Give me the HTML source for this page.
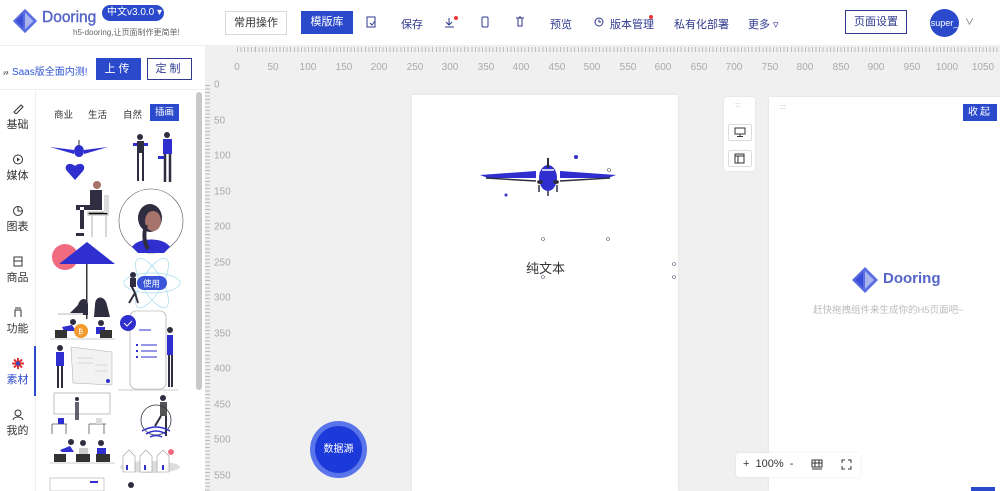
<!DOCTYPE html>
<html><head><meta charset="utf-8">
<style>
*{margin:0;padding:0;box-sizing:border-box}
body{width:1000px;height:491px;overflow:hidden;background:#f0f0f0;font-family:"Liberation Sans","Noto Sans CJK SC",sans-serif;position:relative;color:#333}
.abs{position:absolute}
.hdr{left:0;top:0;width:1000px;height:46px;background:#fff;border-bottom:1px solid #eee}
.nav{font-size:11px;color:#2f3a8f;top:16px}
.btn{border:1px solid #d9d9d9;font-size:11px;text-align:center;line-height:22px;height:24px}
.hn{font-size:10px;color:#aaa;top:62px;transform:translateX(-50%)}
.vn{font-size:10px;color:#aaa;left:214px;transform:translateY(-50%)}
.side{left:0;top:46px;width:205px;height:445px;background:#fff}
.ln{left:0;width:35px;text-align:center;font-size:11px;color:#333}
.ln svg{display:block;margin:0 auto 2px}
</style></head><body>
<div class="abs hdr"></div>
<svg class="abs" style="left:11px;top:7px" width="28" height="28" viewBox="0 0 30 30"><path d="M15 2 L28 15 L15 28 L2 15Z" fill="#5b6ee1"/><path d="M15 6 L24 15 L15 24Z" fill="#a9b4f0"/><path d="M13 7 L13 23 L5 15Z" fill="#3b4fd8"/></svg>
<div class="abs" style="left:42px;top:9px;font-size:15.5px;color:#5564c8;font-weight:normal;-webkit-text-stroke:0.4px #5564c8">Dooring</div>
<div class="abs" style="left:102px;top:5px;width:62px;height:16px;border-radius:8px;background:#2b4acb;color:#fff;font-size:10px;line-height:16px;padding-left:5px">中文v3.0.0 ▾</div>
<div class="abs" style="left:73px;top:27px;font-size:8px;color:#666">h5-dooring,让页面制作更简单!</div>
<div class="abs btn" style="left:225px;top:11px;width:62px;color:#333">常用操作</div>
<div class="abs" style="left:301px;top:11px;width:52px;height:23px;background:#2b4acb;color:#fff;font-size:11px;line-height:23px;text-align:center">模版库</div>
<svg class="abs" style="left:366px;top:16px" width="11" height="12"><rect x="1" y="1" width="8" height="10" fill="none" stroke="#2f3a8f"/><path d="M4 7l2 2 3-4" stroke="#2f3a8f" fill="none"/></svg>
<div class="abs nav" style="left:401px">保存</div>
<svg class="abs" style="left:444px;top:15px" width="14" height="14"><path d="M5 3v7M2 7l3 3 3-3M1 12h9" stroke="#2f3a8f" fill="none"/><circle cx="12" cy="3" r="2" fill="#e33"/></svg>
<svg class="abs" style="left:481px;top:16px" width="9" height="12"><rect x="1" y="1" width="6" height="10" rx="1" fill="none" stroke="#2f3a8f"/></svg>
<svg class="abs" style="left:515px;top:16px" width="10" height="11"><path d="M1 2h8M3 2v8h4V2M4 1h2" stroke="#2f3a8f" fill="none"/></svg>
<div class="abs nav" style="left:550px">预览</div>
<svg class="abs" style="left:594px;top:17px" width="10" height="10"><circle cx="5" cy="5" r="4" fill="none" stroke="#2f3a8f"/><path d="M5 2.5V5h2" stroke="#2f3a8f" fill="none"/></svg>
<div class="abs nav" style="left:610px">版本管理</div>
<div class="abs" style="left:649px;top:15px;width:4px;height:4px;border-radius:2px;background:#e33"></div>
<div class="abs nav" style="left:674px">私有化部署</div>
<div class="abs nav" style="left:748px">更多 ▿</div>
<div class="abs btn" style="left:845px;top:10px;width:62px;border-color:#2f3a8f;color:#2f3a8f">页面设置</div>
<div class="abs" style="left:930px;top:9px;width:29px;height:28px;border-radius:50%;background:#2b4acb;color:#fff;font-size:9px;line-height:28px;text-align:center;overflow:hidden">super_</div>
<div class="abs" style="left:965px;top:15px;font-size:9px;color:#666">∨</div>

<div class="abs side"></div>
<div class="abs" style="left:0;top:46px;width:205px;height:44px;border-bottom:1px solid #eee"></div>
<div class="abs" style="left:3px;top:63px;font-size:10px;color:#2f55d4"><span style="color:#666">𝓃</span> Saas版全面内测!</div>
<div class="abs" style="left:96px;top:58px;width:45px;height:22px;background:#2b4acb;color:#fff;font-size:11px;line-height:22px;text-align:center;letter-spacing:3px">上传</div>
<div class="abs" style="left:147px;top:58px;width:45px;height:22px;border:1px solid #2f3a8f;color:#2f3a8f;font-size:11px;line-height:20px;text-align:center;letter-spacing:3px">定制</div>
<div class="abs" style="left:35px;top:91px;width:1px;height:400px;background:#eee"></div>
<div class="abs ln" style="top:103px"><svg width="12" height="11"><path d="M2 9l7-7 2 2-7 7z" fill="none" stroke="#333"/></svg>基础</div>
<div class="abs ln" style="top:154px"><svg width="12" height="11"><circle cx="6" cy="5.5" r="4.5" fill="none" stroke="#333"/><path d="M5 3.5v4l3-2z" fill="#333"/></svg>媒体</div>
<div class="abs ln" style="top:205px"><svg width="12" height="11"><circle cx="6" cy="6" r="4.5" fill="none" stroke="#333"/><path d="M6 1.5V6h4.5" fill="none" stroke="#333"/></svg>图表</div>
<div class="abs ln" style="top:256px"><svg width="12" height="11"><rect x="2" y="1" width="8" height="9" fill="none" stroke="#333"/><path d="M2 5h8" stroke="#333"/></svg>商品</div>
<div class="abs ln" style="top:307px"><svg width="12" height="11"><path d="M3 10V3h6v7M3 1h6" fill="none" stroke="#333"/></svg>功能</div>
<div class="abs ln" style="top:358px;color:#2b4acb"><svg width="12" height="11"><path d="M6 0v11M0 5.5h12M2 1.5l8 8M10 1.5l-8 8" stroke="#d33" stroke-width="2"/><circle cx="6" cy="5.5" r="2" fill="#2b4acb"/></svg>素材</div>
<div class="abs" style="left:34px;top:346px;width:2px;height:50px;background:#2b4acb"></div>
<div class="abs ln" style="top:409px"><svg width="12" height="11"><circle cx="6" cy="4" r="3" fill="none" stroke="#333"/><path d="M1 11c1-4 9-4 10 0" fill="none" stroke="#333"/></svg>我的</div>
<div class="abs" style="left:54px;top:107px;font-size:9.5px;color:#333">商业</div>
<div class="abs" style="left:88px;top:107px;font-size:9.5px;color:#333">生活</div>
<div class="abs" style="left:123px;top:107px;font-size:9.5px;color:#333">自然</div>
<div class="abs" style="left:150px;top:104px;width:29px;height:17px;background:#2b4acb;color:#fff;font-size:9.5px;line-height:17px;text-align:center">插画</div>
<div class="abs" style="left:196px;top:92px;width:6px;height:298px;border-radius:3px;background:#c8c8c8"></div>

<svg class="abs" style="left:0;top:0" width="200" height="491" viewBox="0 0 200 491">
<path d="M50 147 L74 150 L74 154Z M108 147 L84 150 L84 154Z" fill="#2f2fcf"/><ellipse cx="79" cy="151" rx="5" ry="6" fill="#2f2fcf"/><rect x="78.5" y="140" width="1" height="6" fill="#333"/>
<path d="M75 180 L67 171 c-4-5 2-10 8-5 c6-5 12 0 8 5z" fill="#2f2fcf"/>
<circle cx="97" cy="185" r="4" fill="#a8736a"/><path d="M90 190 h12 v20 h-12z" fill="#2f2e41"/><path d="M76 205 h20 v5 h-20z M80 207 v22 h4 v-22z" fill="#2f2e41"/><path d="M88 212h20v3H88zM92 215v22M106 215v22" stroke="#ccc" stroke-width="1.5"/><rect x="104" y="195" width="5" height="18" fill="#ddd"/><path d="M76 233h8v3h-8z" fill="#2f2e41"/>
<circle cx="140" cy="137" r="3" fill="#2f2e41"/><rect x="137" y="141" width="7" height="12" fill="#2f2e41"/><path d="M138 153v28M143 153v28" stroke="#2f2e41" stroke-width="2"/><rect x="133" y="143" width="4" height="3" fill="#2f2fcf"/><rect x="144" y="143" width="4" height="3" fill="#2f2fcf"/>
<circle cx="167" cy="135" r="3" fill="#2f2e41"/><rect x="163" y="139" width="9" height="15" fill="#2f2fcf"/><path d="M165 154v28M170 154v28" stroke="#2f2e41" stroke-width="2.5"/><rect x="158" y="156" width="6" height="3" fill="#2f2fcf"/>
<circle cx="151" cy="221" r="32" fill="#fff" stroke="#555" stroke-width="0.6"/><ellipse cx="150" cy="218" rx="12" ry="14" fill="#2f2e41"/><ellipse cx="153" cy="221" rx="8" ry="10" fill="#a8736a"/><path d="M132 247c6-10 32-10 38 0l-6 6h-26z" fill="#2f2fcf"/><path d="M146 225 q-4 14 2 24" stroke="#2f2e41" stroke-width="4" fill="none"/>
<circle cx="65" cy="257" r="13" fill="#f06b80"/><path d="M59 264 L87 242 L115 264Z" fill="#2f2fcf"/><rect x="86" y="264" width="1.5" height="55" fill="#333"/>
<path d="M95 305 c0-10 10-10 12 0 l3 12 h-16z" fill="#2f2e41"/><path d="M78 305 c2-8 10-8 10 0v10H68z" fill="#2f2e41"/><path d="M58 314h25" stroke="#ddd" stroke-width="2"/>
<ellipse cx="152" cy="283" rx="28" ry="10" fill="none" stroke="#a6dbf0" stroke-width=".7"/><ellipse cx="152" cy="283" rx="28" ry="10" fill="none" stroke="#a6dbf0" stroke-width=".7" transform="rotate(60 152 283)"/><ellipse cx="152" cy="283" rx="28" ry="10" fill="none" stroke="#a6dbf0" stroke-width=".7" transform="rotate(-60 152 283)"/>
<path d="M131 285 l4 8 l-6 10 M135 293 l3 10" stroke="#2f2e41" stroke-width="2" fill="none"/><circle cx="133" cy="275" r="3" fill="#2f2e41"/><rect x="130" y="278" width="6" height="9" fill="#2f2e41"/>
<rect x="137" y="276" width="30" height="14" rx="7" fill="#3b55d9"/><text x="143" y="286.5" font-size="8.5" fill="#fff" font-family="Noto Sans CJK SC">使用</text>
<circle cx="73" cy="322" r="3" fill="#2f2e41"/><path d="M62 327 l10-2 l4 6 h-12z" fill="#2f2fcf"/><rect x="55" y="330" width="12" height="8" fill="#333"/><circle cx="81" cy="331" r="7" fill="#f29a2e"/><text x="78" y="334" font-size="7" fill="#fff">₿</text><circle cx="101" cy="323" r="3" fill="#2f2e41"/><rect x="96" y="327" width="9" height="7" fill="#2f2fcf"/><rect x="100" y="330" width="12" height="8" fill="#333"/><path d="M50 339h65" stroke="#ccc"/>
<rect x="130" y="311" width="36" height="78" rx="6" fill="#fff" stroke="#999" stroke-width="0.6"/><circle cx="128" cy="323" r="8" fill="#2f2fcf"/><path d="M124 323l3 3 5-5" stroke="#fff" fill="none"/><path d="M139 330h12M141 345h16M141 351h16M141 357h16" stroke="#2f2fcf"/><rect x="136" y="344" width="2" height="2" fill="#2f2fcf"/><rect x="136" y="350" width="2" height="2" fill="#2f2fcf"/><rect x="136" y="356" width="2" height="2" fill="#2f2fcf"/>
<circle cx="170" cy="330" r="3" fill="#2f2e41"/><rect x="167" y="335" width="6" height="20" fill="#2f2fcf"/><path d="M169 355v32M172 355v32" stroke="#2f2e41" stroke-width="2"/><path d="M118 390h60" stroke="#999" stroke-width=".6"/>
<circle cx="60" cy="348" r="3" fill="#2f2e41"/><rect x="56" y="352" width="8" height="14" fill="#2f2fcf"/><path d="M58 366v22M62 366v22" stroke="#2f2e41" stroke-width="2"/><path d="M71 347 L112 352 V385 L73 383Z" fill="#f2f2f2" stroke="#aaa" stroke-width=".5"/><path d="M78 358h15M78 363h15M95 365h12M95 371h12" stroke="#bbb" stroke-width=".6"/><circle cx="108" cy="381" r="2" fill="#2f2fcf"/>
<rect x="54" y="393" width="56" height="21" fill="#fff" stroke="#999" stroke-width=".6"/><circle cx="77" cy="399" r="2" fill="#2f2e41"/><path d="M76 402v18M78 402v18" stroke="#2f2e41" stroke-width="1.5"/><path d="M52 424h15M52 424v10M66 424v10M89 424h17M89 424v10M104 424v10" stroke="#555" stroke-width=".8"/><rect x="58" y="418" width="6" height="6" fill="#2f2fcf"/><rect x="96" y="418" width="6" height="6" fill="#ddd"/>
<circle cx="163" cy="398" r="3" fill="#2f2e41"/><rect x="160" y="402" width="7" height="14" fill="#555"/><path d="M161 416 l-6 10 M166 416 v20" stroke="#2f2e41" stroke-width="2"/><circle cx="156" cy="420" r="15" fill="none" stroke="#2f2e41" stroke-width="0.8"/><path d="M142 431 q14-8 28 0 M146 434 q10-6 20 0 M150 437 q6-3 12 0" stroke="#2f2fcf" stroke-width="1.5" fill="none"/>
<circle cx="71" cy="442" r="3" fill="#2f2e41"/><path d="M60 450 l10-4 l4 6 h-12z" fill="#2f2fcf"/><rect x="54" y="454" width="12" height="8" fill="#333"/><circle cx="83" cy="443" r="3" fill="#2f2e41"/><rect x="79" y="448" width="9" height="7" fill="#ccc"/><rect x="76" y="454" width="14" height="8" fill="#333"/><circle cx="101" cy="443" r="3" fill="#2f2e41"/><rect x="97" y="448" width="9" height="7" fill="#2f2fcf"/><rect x="96" y="454" width="14" height="8" fill="#333"/><path d="M50 463h65" stroke="#ccc"/>
<ellipse cx="150" cy="467" rx="30" ry="6" fill="#ddd"/><path d="M123 472v-16l6-6 6 6v16zM140 472v-16l6-6 6 6v16zM157 472v-16l6-6 6 6v16z" fill="#fff" stroke="#999" stroke-width=".6"/><rect x="126" y="465" width="2" height="5" fill="#2f2fcf"/><rect x="144" y="465" width="2" height="5" fill="#2f2fcf"/><rect x="162" y="465" width="2" height="5" fill="#2f2fcf"/><circle cx="171" cy="452" r="3" fill="#f06b80"/>
<rect x="50" y="478" width="54" height="13" fill="#fff" stroke="#999" stroke-width=".5"/><path d="M90 482h8" stroke="#2f2fcf" stroke-width="2"/><circle cx="131" cy="485" r="3" fill="#2f2e41"/>
</svg>

<div class="abs" style="left:205px;top:47px;width:795px;height:14px;background:repeating-linear-gradient(90deg,#bbb 0 1px,transparent 1px 3.55px) 32px 0/100% 5px no-repeat"></div>
<div class="abs" style="left:205px;top:78px;width:8px;height:413px;background:repeating-linear-gradient(180deg,#bbb 0 1px,transparent 1px 3.55px) 0 7px/5px 100% no-repeat"></div>
<div class="abs hn" style="left:237px">0</div><div class="abs hn" style="left:273px">50</div><div class="abs hn" style="left:308px">100</div><div class="abs hn" style="left:344px">150</div><div class="abs hn" style="left:379px">200</div><div class="abs hn" style="left:415px">250</div><div class="abs hn" style="left:450px">300</div><div class="abs hn" style="left:486px">350</div><div class="abs hn" style="left:521px">400</div><div class="abs hn" style="left:557px">450</div><div class="abs hn" style="left:592px">500</div><div class="abs hn" style="left:628px">550</div><div class="abs hn" style="left:663px">600</div><div class="abs hn" style="left:699px">650</div><div class="abs hn" style="left:734px">700</div><div class="abs hn" style="left:770px">750</div><div class="abs hn" style="left:805px">800</div><div class="abs hn" style="left:841px">850</div><div class="abs hn" style="left:876px">900</div><div class="abs hn" style="left:912px">950</div><div class="abs hn" style="left:947px">1000</div><div class="abs hn" style="left:983px">1050</div>
<div class="abs vn" style="top:85px">0</div><div class="abs vn" style="top:121px">50</div><div class="abs vn" style="top:156px">100</div><div class="abs vn" style="top:192px">150</div><div class="abs vn" style="top:227px">200</div><div class="abs vn" style="top:263px">250</div><div class="abs vn" style="top:298px">300</div><div class="abs vn" style="top:334px">350</div><div class="abs vn" style="top:369px">400</div><div class="abs vn" style="top:405px">450</div><div class="abs vn" style="top:440px">500</div><div class="abs vn" style="top:476px">550</div>

<div class="abs" style="left:412px;top:95px;width:266px;height:396px;background:#fff;box-shadow:0 0 3px rgba(0,0,0,.08)"></div>
<svg class="abs" style="left:478px;top:140px" width="140" height="70" viewBox="0 0 140 70">
<path d="M2 35 L58 31 L58 38 L10 38Z M138 35 L82 31 L82 38 L130 38Z" fill="#2f2fcf"/>
<path d="M8 38 L58 41 M132 38 L82 41" stroke="#2f2e41" stroke-width="1.5"/>
<ellipse cx="70" cy="38" rx="9" ry="13" fill="#2f2fcf"/><rect x="69" y="18" width="2" height="10" fill="#2f2e41"/>
<path d="M64 30h12" stroke="#fff" stroke-width="1.5"/>
<ellipse cx="62" cy="42" rx="3" ry="2" fill="#2f2e41"/><ellipse cx="78" cy="42" rx="3" ry="2" fill="#2f2e41"/>
<circle cx="63" cy="33" r="1.5" fill="#2f2fcf"/><circle cx="98" cy="17" r="2" fill="#2f2fcf"/><circle cx="28" cy="55" r="1.5" fill="#2f2fcf"/>
<path d="M70 51v5M61 45v7M79 45v7" stroke="#2f2e41" stroke-width="1.5"/>
<circle cx="131" cy="30" r="1.5" fill="none" stroke="#555" stroke-width=".6"/>
</svg>
<div class="abs" style="left:526px;top:258px;font-size:13px;color:#333">纯文本</div>
<svg class="abs" style="left:538px;top:234px" width="140" height="48"><g fill="none" stroke="#557" stroke-width=".6"><circle cx="5" cy="5" r="1.5"/><circle cx="70" cy="5" r="1.5"/><circle cx="5" cy="43" r="1.5"/><circle cx="136" cy="30" r="1.5"/><circle cx="136" cy="43" r="1.5"/></g></svg>

<div class="abs" style="left:310px;top:421px;width:57px;height:57px;border-radius:50%;background:#5a74ea"></div>
<div class="abs" style="left:315px;top:426px;width:47px;height:47px;border-radius:50%;background:#1c3ad9;color:#fff;font-size:10px;line-height:47px;text-align:center">数据源</div>

<div class="abs" style="left:724px;top:97px;width:31px;height:74px;background:#fff;border-radius:3px;box-shadow:0 0 3px rgba(0,0,0,.08)"></div>
<div class="abs" style="left:735px;top:102px;font-size:7px;color:#aaa">:::</div>
<div class="abs" style="left:728px;top:124px;width:24px;height:17px;border:1px solid #ddd;border-radius:2px"></div>
<svg class="abs" style="left:734px;top:127px" width="12" height="11"><rect x="1" y="1" width="10" height="6" fill="none" stroke="#333"/><path d="M6 7v2M3 9.5h6" stroke="#333"/></svg>
<div class="abs" style="left:728px;top:150px;width:24px;height:17px;border:1px solid #ddd;border-radius:2px"></div>
<svg class="abs" style="left:734px;top:153px" width="12" height="11"><rect x="1" y="1" width="9" height="9" fill="none" stroke="#333"/><path d="M1 3h9M4 3v7" stroke="#333"/></svg>

<div class="abs" style="left:769px;top:97px;width:231px;height:394px;background:#fff;box-shadow:0 0 3px rgba(0,0,0,.08)"></div>
<div class="abs" style="left:780px;top:104px;font-size:7px;color:#aaa">:::</div>
<div class="abs" style="left:963px;top:104px;width:34px;height:17px;background:#2b4acb;color:#fff;font-size:10px;line-height:17px;text-align:center;letter-spacing:2px">收起</div>
<svg class="abs" style="left:850px;top:265px" width="30" height="30" viewBox="0 0 30 30"><path d="M15 2 L28 15 L15 28 L2 15Z" fill="#5b6ee1"/><path d="M15 6 L24 15 L15 24Z" fill="#a9b4f0"/><path d="M13 7 L13 23 L5 15Z" fill="#3b4fd8"/></svg>
<div class="abs" style="left:883px;top:270px;font-size:15px;color:#5564c8;font-weight:bold">Dooring</div>
<div class="abs" style="left:813px;top:302px;font-size:9.5px;color:#bbb">赶快拖拽组件来生成你的H5页面吧~</div>
<div class="abs" style="left:971px;top:487px;width:24px;height:4px;background:#2b4acb"></div>

<div class="abs" style="left:736px;top:453px;width:124px;height:24px;background:#fff;border-radius:3px;box-shadow:0 0 3px rgba(0,0,0,.08)"></div>
<div class="abs" style="left:743px;top:458px;font-size:11px;color:#333">+ &nbsp;100% &nbsp;-</div>
<svg class="abs" style="left:811px;top:459px" width="12" height="11"><rect x="1" y="1" width="10" height="7" fill="none" stroke="#333"/><path d="M1 4h10M4 1v7M8 1v7M1 10h10" stroke="#333"/></svg>
<svg class="abs" style="left:841px;top:459px" width="11" height="11"><path d="M1 4V1h3M7 1h3v3M10 7v3H7M4 10H1V7" fill="none" stroke="#333"/></svg>
</body></html>
